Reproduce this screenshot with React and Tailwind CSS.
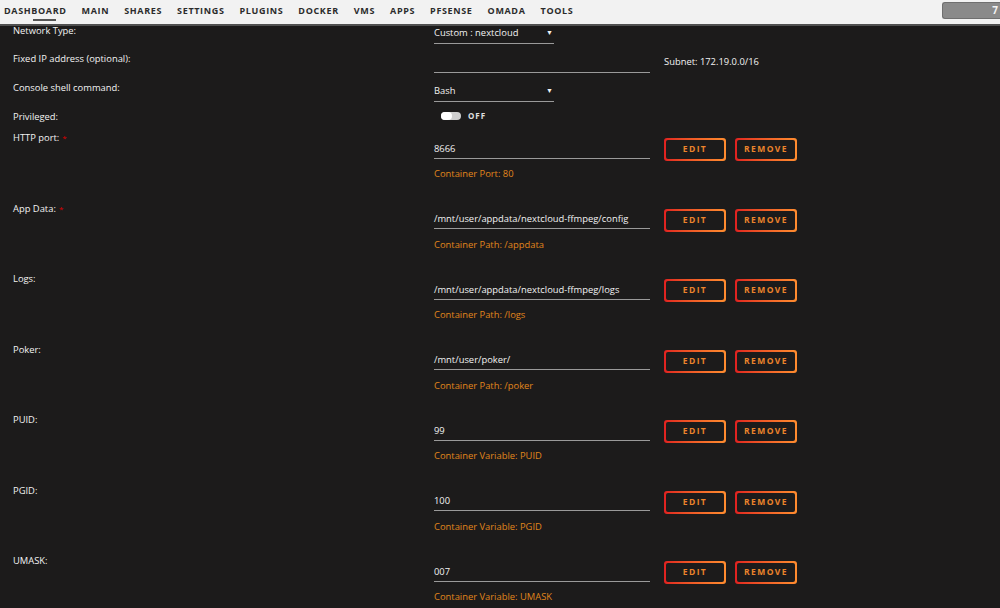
import React from 'react';

const navItems = ['Dashboard', 'Main', 'Shares', 'Settings', 'Plugins', 'Docker', 'VMs', 'Apps', 'pfSense', 'Omada', 'Tools'];

const mappings = [
  { label: 'HTTP port:', required: true, value: '8666', note: 'Container Port: 80' },
  { label: 'App Data:', required: true, value: '/mnt/user/appdata/nextcloud-ffmpeg/config', note: 'Container Path: /appdata' },
  { label: 'Logs:', value: '/mnt/user/appdata/nextcloud-ffmpeg/logs', note: 'Container Path: /logs' },
  { label: 'Poker:', value: '/mnt/user/poker/', note: 'Container Path: /poker' },
  { label: 'PUID:', value: '99', note: 'Container Variable: PUID' },
  { label: 'PGID:', value: '100', note: 'Container Variable: PGID' },
  { label: 'UMASK:', value: '007', note: 'Container Variable: UMASK' },
];

const GradientButton = ({ children }) => (
  <button className="w-[62px] h-[23px] rounded-[3px] p-[2px] bg-gradient-to-r from-[#e02020] to-[#ff8c2f]">
    <span className="flex h-full w-full items-center justify-center rounded-[2px] bg-[#1c1b1b] text-[8.5px] font-bold tracking-[1.4px] text-[#ec842c]">
      {children}
    </span>
  </button>
);

const Label = ({ children, required }) => (
  <div className="w-[421px] shrink-0 pt-[1px] text-[9.4px] leading-[14px] text-[#f2f2f2]">
    {children}
    {required && <span className="ml-[3px] align-top text-[8px] text-[#d00]">*</span>}
  </div>
);

const SelectBox = ({ value }) => (
  <div className="flex h-[18px] w-[120px] items-start justify-between border-b border-[#9a9a9a] text-[9.4px] leading-[14px] text-[#f2f2f2]">
    <span>{value}</span>
    <span className="pr-[1px] text-[7px] leading-[14px]">▼</span>
  </div>
);

const App = () => {
  return (
    <div className="min-h-screen bg-[#1c1b1b] font-['Open_Sans',sans-serif] text-[#f2f2f2]">
      {/* Header */}
      <header className="relative z-10 flex h-[26px] items-start overflow-hidden border-b-2 border-[#505050] bg-[#f2f2f2]">
        <nav className="flex gap-[15px] pl-[4px] pt-[5px]">
          {navItems.map((item, i) => (
            <span key={item} className="relative text-[9px] font-bold uppercase leading-[12px] tracking-[0.65px] text-[#2b2b2b]">
              {item}
              {i === 0 && <span className="absolute left-[29px] top-[14px] h-[2px] w-[23px] bg-[#555]" />}
            </span>
          ))}
        </nav>
        <div className="ml-auto mt-[2px] flex h-[17px] w-[58px] items-center justify-end rounded-l-[3px] border border-r-0 border-[#6f6f6f] bg-[#8a8a8a] pr-[2px] text-[10px] font-bold text-[#f2f2f2]">
          7
        </div>
      </header>

      <div className="pl-[13px]">
        {/* Network Type */}
        <div className="flex h-[25px]">
          <div className="-mt-[3px]">
            <Label>Network Type:</Label>
          </div>
          <SelectBox value="Custom : nextcloud" />
        </div>

        {/* Fixed IP */}
        <div className="flex h-[29px]">
          <Label>Fixed IP address (optional):</Label>
          <div className="mt-[4px] flex items-start gap-[14px]">
            <div className="h-[18px] w-[216px] border-b border-[#9a9a9a]" />
            <span className="text-[9.4px] leading-[14px]">Subnet: 172.19.0.0/16</span>
          </div>
        </div>

        {/* Console */}
        <div className="flex h-[29px]">
          <Label>Console shell command:</Label>
          <div className="mt-[4px]">
            <SelectBox value="Bash" />
          </div>
        </div>

        {/* Privileged */}
        <div className="flex h-[21px]">
          <Label>Privileged:</Label>
          <div className="flex h-[14px] items-center gap-[7px] pl-[7px]">
            <div className="flex h-[8px] w-[20px] items-center rounded-full bg-[#cfcfcf]">
              <div className="h-[8px] w-[11px] rounded-full bg-white" />
            </div>
            <span className="text-[8px] font-bold leading-[14px] tracking-[1px] text-[#e0e0e0]">OFF</span>
          </div>
        </div>

        {/* Mappings */}
        {mappings.map((m) => (
          <div key={m.label} className="flex h-[70.5px]">
            <Label required={m.required}>{m.label}</Label>
            <div className="pt-[8px]">
              <div className="flex items-center">
                <div className="h-[18px] w-[216px] pt-[1px] border-b border-[#9a9a9a] text-[9.4px] leading-[14px] text-[#f2f2f2]">
                  {m.value}
                </div>
                <div className="ml-[14px] flex gap-[9px]">
                  <GradientButton>EDIT</GradientButton>
                  <GradientButton>REMOVE</GradientButton>
                </div>
              </div>
              <div className="mt-[6px] text-[9.4px] leading-[14px] text-[#e0861c]">{m.note}</div>
            </div>
          </div>
        ))}
      </div>
    </div>
  );
};

export default App;
